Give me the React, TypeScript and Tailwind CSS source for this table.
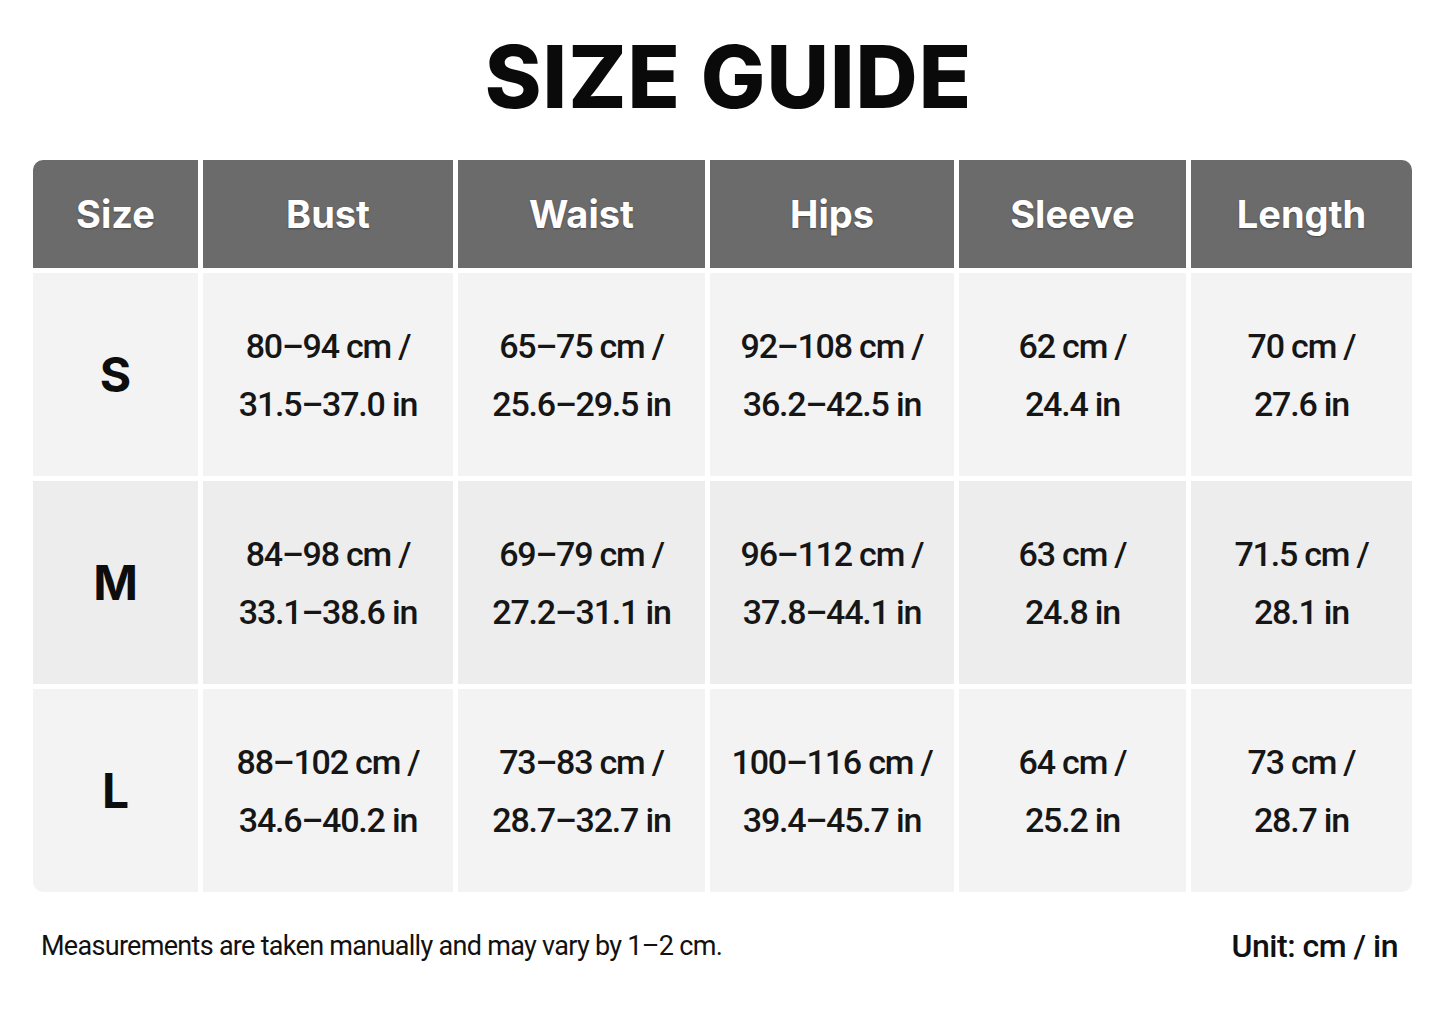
import React from "react";

const headers = ["Size", "Bust", "Waist", "Hips", "Sleeve", "Length"];
const rows: { size: string; bg: string; cells: [string, string][] }[] = [
  {
    size: "S",
    bg: "bg-[#f3f3f3]",
    cells: [
      ["80–94 cm /", "31.5–37.0 in"],
      ["65–75 cm /", "25.6–29.5 in"],
      ["92–108 cm /", "36.2–42.5 in"],
      ["62 cm /", "24.4 in"],
      ["70 cm /", "27.6 in"],
    ],
  },
  {
    size: "M",
    bg: "bg-[#ededed]",
    cells: [
      ["84–98 cm /", "33.1–38.6 in"],
      ["69–79 cm /", "27.2–31.1 in"],
      ["96–112 cm /", "37.8–44.1 in"],
      ["63 cm /", "24.8 in"],
      ["71.5 cm /", "28.1 in"],
    ],
  },
  {
    size: "L",
    bg: "bg-[#f3f3f3]",
    cells: [
      ["88–102 cm /", "34.6–40.2 in"],
      ["73–83 cm /", "28.7–32.7 in"],
      ["100–116 cm /", "39.4–45.7 in"],
      ["64 cm /", "25.2 in"],
      ["73 cm /", "28.7 in"],
    ],
  },
];

function Cell({ bg, lines }: { bg: string; lines: [string, string] }) {
  return (
    <div
      className={`h-[203px] ${bg} flex flex-col items-center justify-center font-['Roboto',sans-serif] font-medium text-[34px] leading-[58px] text-[#161616] tracking-[-1.2px]`}
    >
      <span>{lines[0]}</span>
      <span>{lines[1]}</span>
    </div>
  );
}

export default function App() {
  return (
    <div className="w-[1445px] h-[1022px] bg-white flex flex-col items-center overflow-hidden">
      <h1 className="mt-[30px] ml-[12px] h-[94px] flex items-center font-['Inter',sans-serif] text-[86px] font-extrabold tracking-[1px] text-[#0a0a0a] leading-none">
        SIZE GUIDE
      </h1>
      <div className="mt-[36px] grid grid-cols-[165px_250px_247px_244px_227px_221px] gap-[5px] rounded-[10px] overflow-hidden">
        {headers.map((h) => (
          <div
            key={h}
            className="h-[108px] bg-[#6b6b6b] flex items-center justify-center font-['Inter',sans-serif] text-white text-[38px] font-bold [text-shadow:0_1px_2px_rgba(0,0,0,0.35)]"
          >
            {h}
          </div>
        ))}
        {rows.map((r) => (
          <React.Fragment key={r.size}>
            <div
              className={`h-[203px] ${r.bg} flex items-center justify-center font-['Inter',sans-serif] text-[48px] font-bold text-[#0d0d0d]`}
            >
              {r.size}
            </div>
            {r.cells.map((c, i) => (
              <Cell key={i} bg={r.bg} lines={c} />
            ))}
          </React.Fragment>
        ))}
      </div>
      <div className="w-full px-[41px] mt-[30px] flex items-center justify-between">
        <span className="font-['Roboto',sans-serif] text-[27px] text-[#111] tracking-[-0.7px]">
          Measurements are taken manually and may vary by 1–2 cm.
        </span>
        <span className="font-['Roboto',sans-serif] text-[32px] font-medium text-[#111] tracking-[-0.5px] mr-[6px]">
          Unit: cm / in
        </span>
      </div>
    </div>
  );
}
